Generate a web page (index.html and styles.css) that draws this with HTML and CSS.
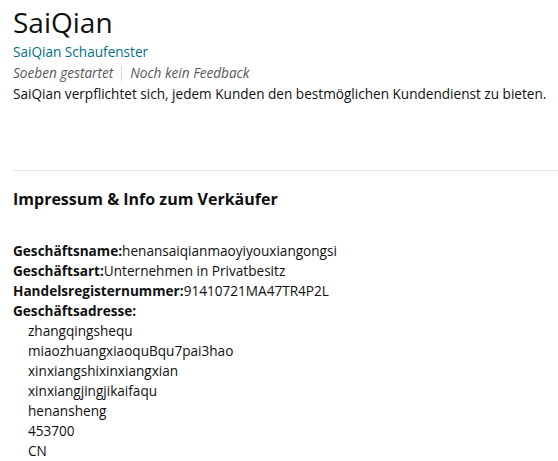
FILE: index.html
```html
<!DOCTYPE html>
<html lang="de">
<head>
  <meta charset="UTF-8" />
  <meta name="viewport" content="width=device-width, initial-scale=1.0" />
  <title>SaiQian</title>
  <link rel="stylesheet" href="styles.css">
</head>
<body>
  <div class="seller-header">
    <h1>SaiQian</h1>
    <a class="storefront" href="#">SaiQian Schaufenster</a>
    <div class="rating">
      <span>Soeben gestartet</span>
      <span class="divider"></span>
      <span>Noch kein Feedback</span>
    </div>
    <p class="about">SaiQian verpflichtet sich, jedem Kunden den bestmöglichen Kundendienst zu bieten.</p>
  </div>

  <hr class="section-rule" />

  <div class="imprint">
    <h3>Impressum &amp; Info zum Verkäufer</h3>
    <div class="details">
      <div><b>Geschäftsname:</b>henansaiqianmaoyiyouxiangongsi</div>
      <div><b>Geschäftsart:</b>Unternehmen in Privatbesitz</div>
      <div><b>Handelsregisternummer:</b>91410721MA47TR4P2L</div>
      <div><b>Geschäftsadresse:</b></div>
      <div class="address">
        <div>zhangqingshequ</div>
        <div>miaozhuangxiaoquBqu7pai3hao</div>
        <div>xinxiangshixinxiangxian</div>
        <div>xinxiangjingjikaifaqu</div>
        <div>henansheng</div>
        <div>453700</div>
        <div>CN</div>
      </div>
    </div>
  </div>
</body>
</html>
```

FILE: styles.css
```css
* {
  box-sizing: border-box;
}

body {
  margin: 0;
  padding: 0 0 0 13px;
  font-family: "Open Sans", Arial, sans-serif;
  font-size: 13.6px;
  line-height: 20px;
  color: #0f1111;
  background-color: #ffffff;
}

h1 {
  font-size: 28px;
  font-weight: 400;
  line-height: 36px;
  margin: 4px 0 1px;
}

.storefront {
  display: block;
  color: #007185;
  text-decoration: none;
  line-height: 22px;
}

.rating {
  display: flex;
  align-items: center;
  gap: 8px;
  color: #565959;
  font-style: italic;
}

.divider {
  width: 1px;
  height: 15px;
  background-color: #d5d9d9;
}

.about {
  margin: 0;
  line-height: 21px;
}

.section-rule {
  border: none;
  border-top: 1px solid #e7e7e7;
  margin: 66px 0 0;
}

.imprint h3 {
  font-size: 16px;
  font-weight: 700;
  line-height: 20px;
  margin: 18px 0 32px;
}

.details b {
  font-weight: 700;
}

.address {
  padding-left: 15px;
}
```
